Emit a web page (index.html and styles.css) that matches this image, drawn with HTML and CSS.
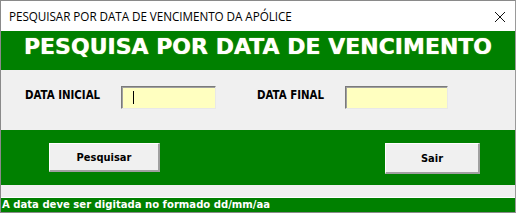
FILE: index.html
```html
<!DOCTYPE html>
<html lang="pt">
<head>
<meta charset="utf-8">
<title>Pesquisar por data de vencimento</title>
<link rel="stylesheet" href="styles.css">
</head>
<body>
<div class="window">
  <div class="titlebar">
    <span class="title-text">PESQUISAR POR DATA DE VENCIMENTO DA APÓLICE</span>
    <svg class="close" width="12" height="12" viewBox="0 0 12 12"><path d="M1 1 L11 11 M11 1 L1 11" stroke="#111" stroke-width="1" fill="none"/></svg>
  </div>
  <div class="header">PESQUISA POR DATA DE VENCIMENTO</div>
  <div class="panel">
    <div class="field">
      <span class="label">DATA INICIAL</span>
      <div class="input input-a"><span class="caret"></span></div>
    </div>
    <div class="field">
      <span class="label">DATA FINAL</span>
      <div class="input input-b"></div>
    </div>
  </div>
  <div class="actions">
    <div class="btn btn-search">Pesquisar</div>
    <div class="btn btn-exit">Sair</div>
  </div>
  <div class="spacer"></div>
  <div class="status">A data deve ser digitada no formado dd/mm/aa</div>
</div>
</body>
</html>
```

FILE: styles.css
```css
* { box-sizing: border-box; }
html, body { margin: 0; padding: 0; }
body { width: 516px; height: 213px; overflow: hidden; background: #fff; }
.window {
  width: 516px;
  height: 213px;
  border: 1px solid #8a8a8a;
  border-right-color: #9a9a9a;
  display: flex;
  flex-direction: column;
  background: #f0f0f0;
}
.titlebar {
  height: 30px;
  background: #fff;
  display: flex;
  align-items: center;
  justify-content: space-between;
  padding: 0 9px 0 8px;
}
.title-text {
  font-family: "Open Sans", "Noto Sans", sans-serif;
  font-size: 11.7px;
  color: #000;
  letter-spacing: -0.05px;
}
.close { display: block; margin-top: 2px; }
.header {
  height: 39px;
  background: #008000;
  color: #fff;
  font-family: "DejaVu Sans", sans-serif;
  font-weight: bold;
  font-size: 22px;
  text-align: center;
  line-height: 31px;
  text-shadow: 0 0 1px #ffff80;
}
.panel {
  height: 60px;
  display: flex;
  padding: 16px 0 0 24px;
}
.field { display: flex; align-items: flex-start; }
.label {
  font-family: "DejaVu Sans Condensed", "DejaVu Sans", sans-serif;
  font-weight: bold;
  font-size: 11.4px;
  color: #000;
  margin-top: 2px;
}
.field:first-child .label { width: 96px; }
.field:last-child { margin-left: 41px; }
.field:last-child .label { width: 88px; }
.input {
  height: 23px;
  background: #ffffc0;
  border: 1px solid;
  border-color: #7a7a7a #e8e8e8 #e8e8e8 #7a7a7a;
  box-shadow: inset 1px 1px 0 #a0a0a0;
  position: relative;
}
.input-a { width: 95px; }
.input-b { width: 103px; }
.caret {
  position: absolute;
  left: 11px;
  top: 4px;
  width: 1px;
  height: 13px;
  background: #000;
}
.actions {
  height: 55px;
  background: #008000;
  display: flex;
  justify-content: space-between;
  padding: 13px 35px 0 48px;
}
.btn {
  background: #f0f0f0;
  border-top: 1px solid #fff;
  border-left: 1px solid #fff;
  border-right: 2px solid #a0a0a0;
  border-bottom: 2px solid #a0a0a0;
  font-family: "DejaVu Sans Condensed", "DejaVu Sans", sans-serif;
  font-weight: bold;
  font-size: 11px;
  color: #000;
  display: flex;
  align-items: center;
  justify-content: center;
}
.btn-search { width: 111px; height: 29px; }
.btn-exit { width: 95px; height: 31px; }
.spacer { height: 13px; background: #f0f0f0; border-bottom: 1px solid #fff; }
.status {
  flex: 1;
  background: #008000;
  color: #fff;
  font-family: "DejaVu Sans Condensed", "DejaVu Sans", sans-serif;
  font-weight: bold;
  font-size: 11.2px;
  line-height: 13px;
  padding-left: 1px;
  white-space: nowrap;
}
```
